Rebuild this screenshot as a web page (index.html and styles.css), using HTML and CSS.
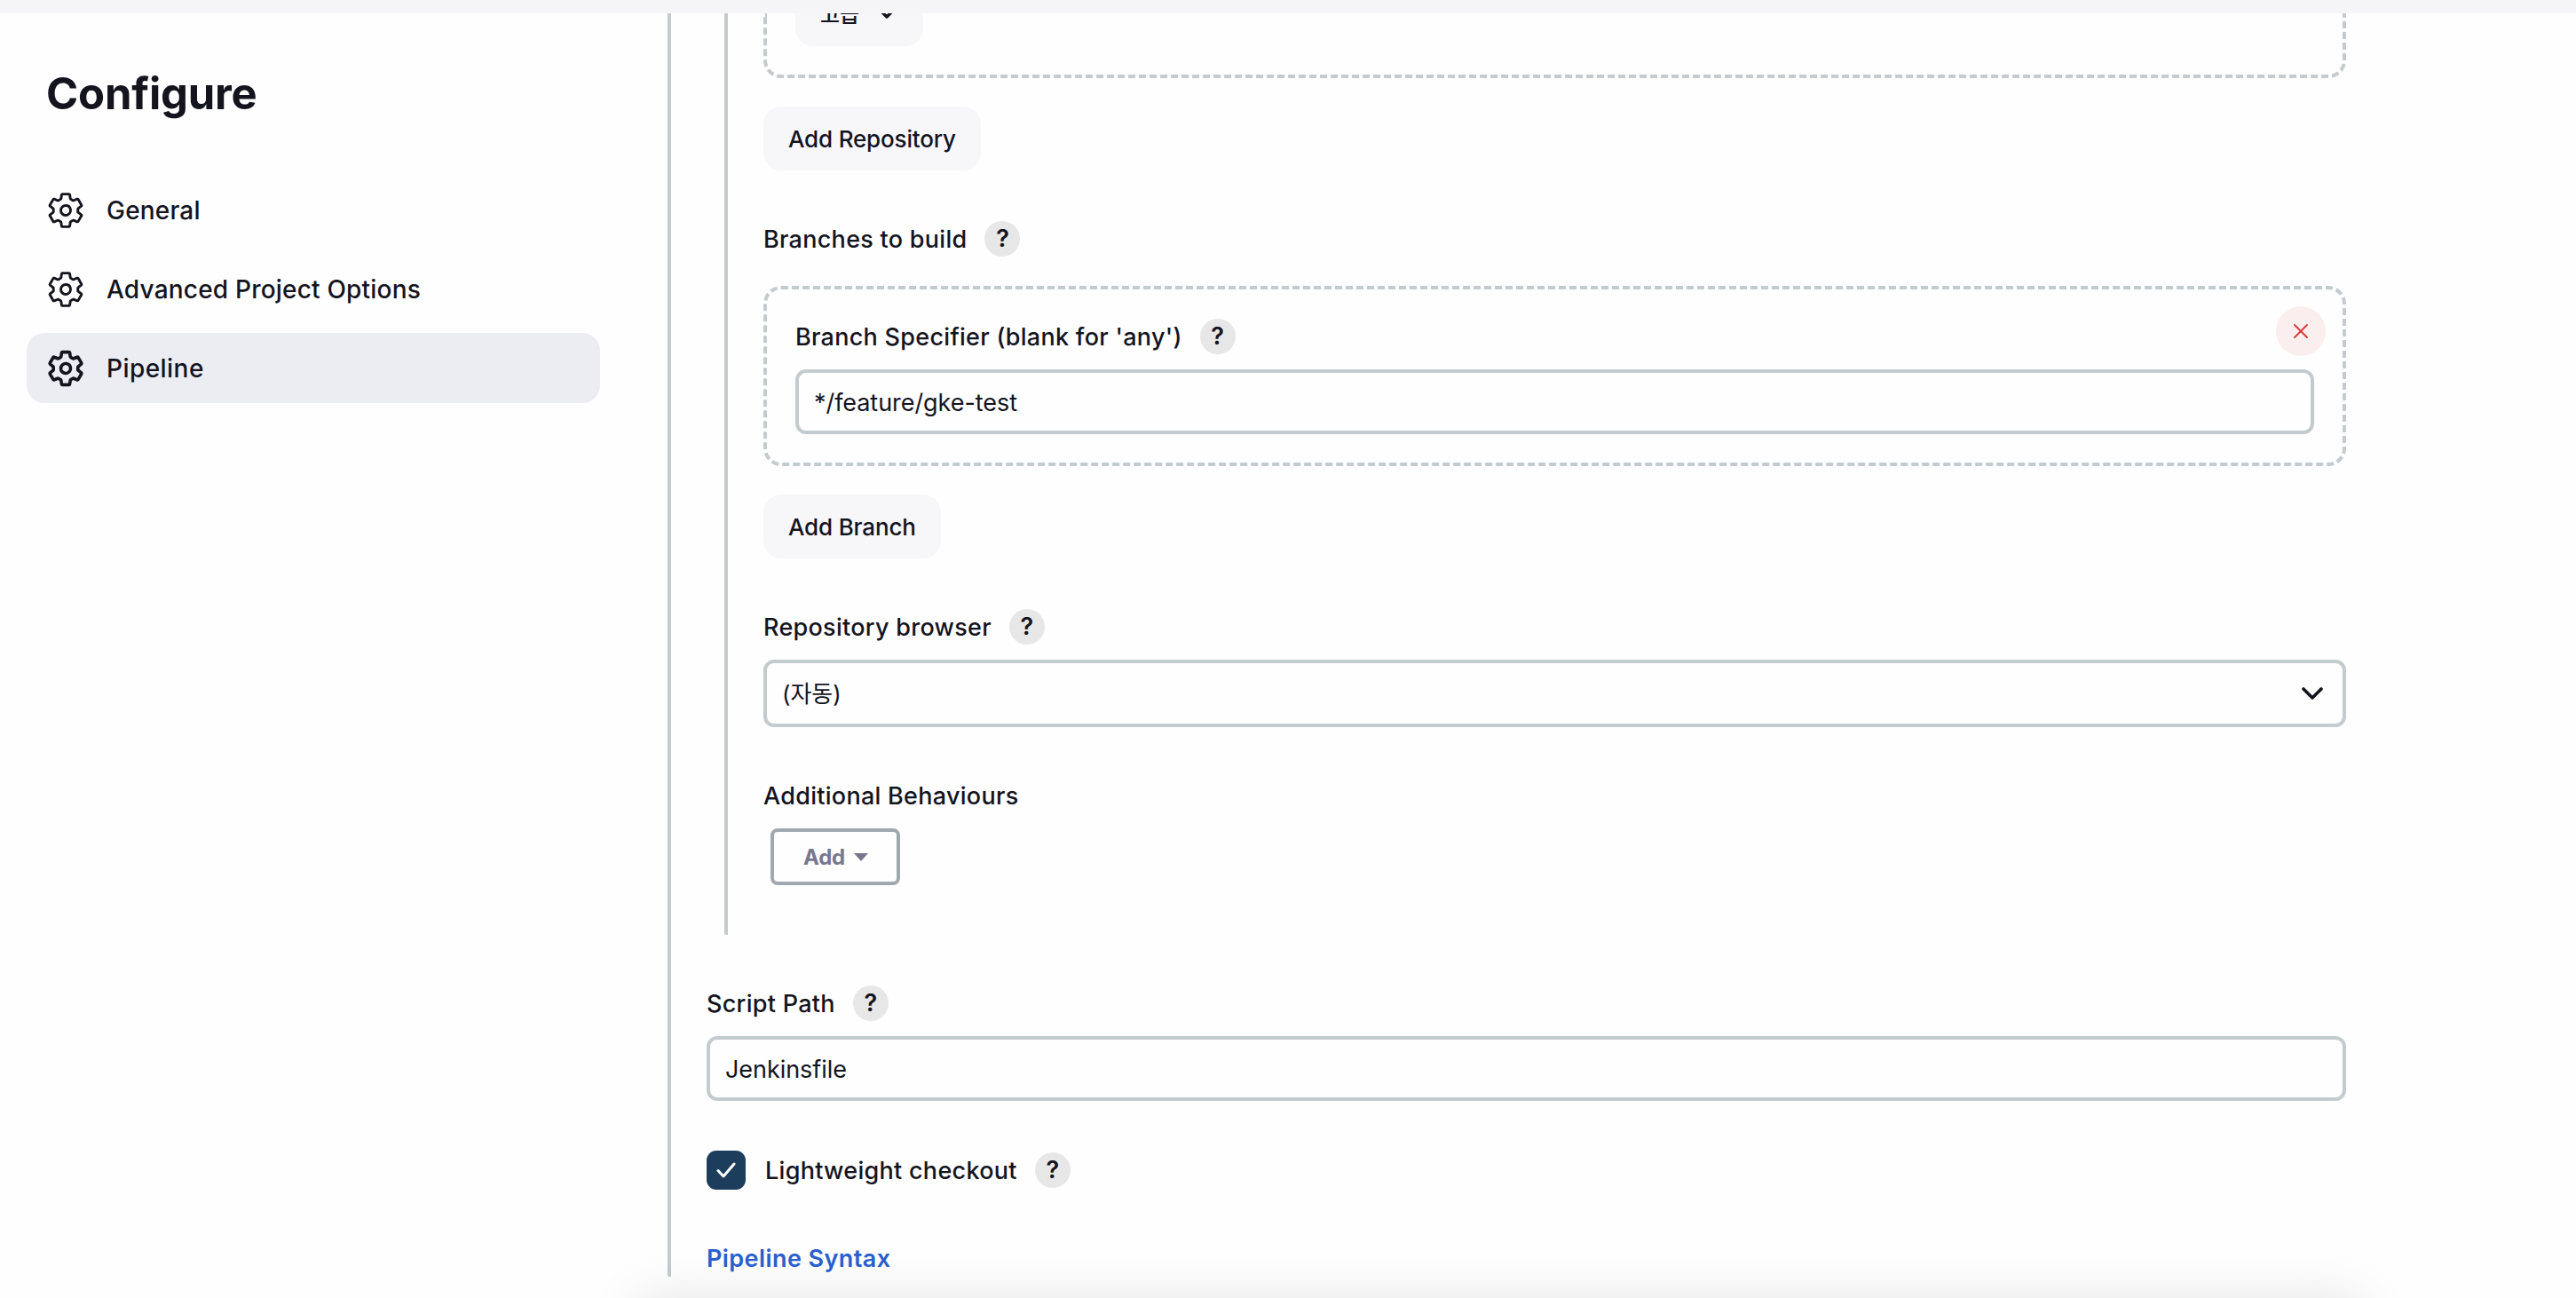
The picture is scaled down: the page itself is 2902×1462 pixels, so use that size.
FILE: index.html
```html
<!DOCTYPE html>
<html lang="ko">
<head>
<meta charset="utf-8">
<title>Configure</title>
<link rel="stylesheet" href="styles.css">
</head>
<body>
<svg class="sprite" aria-hidden="true">
  <symbol id="gear" viewBox="0 0 512 512"><path d="M262.29 192.31a64 64 0 1057.4 57.4 64.13 64.13 0 00-57.4-57.4zM416.39 256a154.34 154.34 0 01-1.53 20.79l45.21 35.46a10.81 10.81 0 012.45 13.75l-42.77 74a10.81 10.81 0 01-13.14 4.59l-44.9-18.08a16.11 16.11 0 00-15.17 1.75A164.48 164.48 0 01325 400.8a15.94 15.94 0 00-8.82 12.14l-6.73 47.89a11.08 11.08 0 01-10.68 9.17h-85.54a11.11 11.11 0 01-10.69-8.87l-6.72-47.82a16.07 16.07 0 00-9-12.22 155.3 155.3 0 01-21.46-12.57 16 16 0 00-15.11-1.71l-44.89 18.07a10.81 10.81 0 01-13.14-4.58l-42.77-74a10.8 10.8 0 012.45-13.75l38.21-30a16.05 16.05 0 006-14.08c-.36-4.17-.58-8.33-.58-12.5s.21-8.27.58-12.35a16 16 0 00-6.07-13.94l-38.19-30A10.81 10.81 0 0149.48 186l42.77-74a10.81 10.81 0 0113.14-4.59l44.9 18.08a16.11 16.11 0 0015.17-1.75A164.48 164.48 0 01187 111.2a15.94 15.94 0 008.82-12.14l6.73-47.89A11.08 11.08 0 01213.23 42h85.54a11.11 11.11 0 0110.69 8.87l6.72 47.82a16.07 16.07 0 009 12.22 155.3 155.3 0 0121.46 12.57 16 16 0 0015.11 1.71l44.89-18.07a10.81 10.81 0 0113.14 4.58l42.77 74a10.8 10.8 0 01-2.45 13.75l-38.21 30a16.05 16.05 0 00-6.05 14.08c.33 4.14.55 8.3.55 12.47z"/></symbol>
</svg>
<header class="breadcrumb-bar"></header>
<div class="page">
  <aside class="side">
    <h1 class="title">Configure</h1>
    <nav class="nav">
      <a class="nav-item"><svg class="gear"><use href="#gear"/></svg><span>General</span></a>
      <a class="nav-item"><svg class="gear"><use href="#gear"/></svg><span>Advanced Project Options</span></a>
      <a class="nav-item active"><svg class="gear"><use href="#gear"/></svg><span>Pipeline</span></a>
    </nav>
  </aside>
  <main class="definition">
    <section class="scm">
      <div class="repo-box">
        <button class="btn advanced"><span>고급</span><svg class="adv-chevron" viewBox="0 0 16 10"><path d="M2 2l6 6 6-6"/></svg></button>
      </div>
      <button class="btn after-box">Add Repository</button>
      <div class="label section"><span>Branches to build</span><b class="help">?</b></div>
      <div class="branch-box">
        <button class="delete" aria-label="Delete"><svg viewBox="0 0 16 16"><path d="M1 1l14 14M15 1L1 15"/></svg></button>
        <div class="label"><span>Branch Specifier (blank for 'any')</span><b class="help">?</b></div>
        <div class="input">*/feature/gke-test</div>
      </div>
      <button class="btn after-box">Add Branch</button>
      <div class="label section"><span>Repository browser</span><b class="help">?</b></div>
      <div class="input select"><span>(자동)</span><svg class="chevron" viewBox="0 0 24 14"><path d="M2 2l10 10L22 2"/></svg></div>
      <div class="label section"><span>Additional Behaviours</span></div>
      <button class="add-menu"><span>Add</span><i class="caret"></i></button>
    </section>
    <div class="label section"><span>Script Path</span><b class="help">?</b></div>
    <div class="input">Jenkinsfile</div>
    <div class="check-row">
      <i class="checkbox"><svg viewBox="0 0 22 18"><path d="M2 9.5l6 6.5L20 2"/></svg></i>
      <div class="label"><span>Lightweight checkout</span><b class="help">?</b></div>
    </div>
    <a class="syntax">Pipeline Syntax</a>
  </main>
  <div class="bottom-bar"></div>
</div>
</body>
</html>
```
FILE: styles.css
```css
* { box-sizing: border-box; }

body {
  margin: 0;
  height: 1462px;
  overflow: hidden;
  background: #fefefe;
  color: #14141f;
  font-family: Inter, "Noto Sans CJK KR", sans-serif;
  font-size: 27px;
  font-weight: 500;
}

button { font: inherit; color: inherit; border: 0; padding: 0; }
.sprite { display: none; }

.breadcrumb-bar { height: 15px; background: #f5f5f8; }

.page {
  position: relative;
  display: flex;
  height: 1447px;
  overflow: hidden;
}

/* Side panel */
.side { width: 752px; padding: 0 76px 0 30px; }
.title {
  margin: 59px 0 0 22px;
  font-size: 49px;
  font-weight: 700;
  line-height: 64px;
  letter-spacing: -.2px;
}
.nav {
  display: flex;
  flex-direction: column;
  gap: 10px;
  margin-top: 59px;
}
.nav-item {
  display: flex;
  align-items: center;
  gap: 24px;
  height: 79px;
  padding-left: 22px;
  border-radius: 20px;
  font-size: 28px;
  letter-spacing: .2px;
}
.nav-item.active {
  background: #ecedf3;
  font-weight: 550;
  letter-spacing: .45px;
}
svg path { fill: none; stroke: currentColor; stroke-linecap: round; stroke-linejoin: round; }
.gear { width: 44px; height: 44px; stroke-width: 34px; }
.active .gear { stroke-width: 42px; }

/* Form */
.definition {
  width: 1891px;
  height: 1423px;
  padding-left: 40px;
  border-left: 4px solid #c4cbcf;
  border-bottom-left-radius: 2px;
}
.scm {
  height: 1038px;
  margin-left: 20px;
  padding-left: 40px;
  border-left: 4px solid #c4cbcf;
  border-bottom-left-radius: 2px;
}
.repo-box {
  display: flex;
  align-items: flex-end;
  height: 73px;
  padding: 0 32px 32px;
  overflow: hidden;
  border: 4px dashed #c4cbcf;
  border-top: 0;
  border-radius: 0 0 20px 20px;
}
.btn {
  display: block;
  height: 72px;
  padding: 0 28px;
  border-radius: 20px;
  background: #f7f7fa;
  font-size: 26px;
  letter-spacing: -.16px;
  white-space: nowrap;
}
.after-box { margin-top: 32px; }
.advanced {
  display: flex;
  flex: none;
  align-items: center;
  justify-content: space-between;
  width: 144px;
  font-size: 24px;
}
.advanced span { padding-bottom: 3px; }
.adv-chevron { width: 16px; height: 10px; margin-right: 5px; }
.adv-chevron path { stroke-width: 3.4px; }

.label {
  display: flex;
  align-items: center;
  gap: 20px;
  height: 40px;
  letter-spacing: .28px;
  white-space: nowrap;
}
.label.section { margin-top: 57px; }
.help {
  width: 40px;
  height: 40px;
  border-radius: 50%;
  background: #e7e7e7;
  font-size: 27px;
  font-weight: 600;
  letter-spacing: 0;
  line-height: 40px;
  text-align: center;
}

.input {
  display: flex;
  align-items: center;
  height: 73px;
  margin-top: 17px;
  padding: 1px 17px 0;
  border: 4px solid #c4cbcf;
  border-radius: 12px;
  font-weight: 400;
  letter-spacing: -.05px;
}
.select {
  justify-content: space-between;
  height: 76px;
  padding: 0 22px 0 17px;
  font-size: 26px;
}
.select span { padding-bottom: 3px; }
.chevron { width: 24px; height: 14px; }
.chevron path { stroke-width: 3.6px; }

.branch-box {
  position: relative;
  height: 203px;
  margin-top: 33px;
  padding: 33px 32px 32px;
  border: 4px dashed #c4cbcf;
  border-radius: 20px;
}
.delete {
  position: absolute;
  top: 19px;
  right: 19px;
  display: flex;
  align-items: center;
  justify-content: center;
  width: 56px;
  height: 56px;
  border-radius: 50%;
  background: #fbeeee;
  color: #d93434;
}
.delete svg { width: 16px; height: 16px; }
.delete path { stroke-width: 1.8px; }

.add-menu {
  display: flex;
  align-items: center;
  gap: 10px;
  width: 146px;
  height: 64px;
  margin: 17px 0 0 8px;
  padding-left: 33px;
  border: 4px solid #9ea8ae;
  border-radius: 8px;
  background: none;
  color: #77778e;
  font-size: 24px;
  font-weight: 700;
  letter-spacing: -.2px;
}
.caret {
  border: 8px solid transparent;
  border-top: 9px solid #77778e;
  border-bottom: 0;
}

.check-row { display: flex; align-items: center; gap: 22px; height: 44px; margin-top: 56px; }
.checkbox {
  display: flex;
  align-items: center;
  justify-content: center;
  width: 44px;
  height: 44px;
  border-radius: 11px;
  background: #1c3d5c;
  color: #fff;
}
.checkbox svg { width: 22px; height: 18px; }
.checkbox path { stroke-width: 3px; }
.syntax {
  display: block;
  margin-top: 58px;
  color: #2a60cf;
  font-weight: 600;
  letter-spacing: .42px;
  line-height: 40px;
}

/* Sticky save bar sits just below the fold; only its shadow shows */
.bottom-bar {
  position: absolute;
  left: 716px;
  top: 1447px;
  width: 1947px;
  height: 120px;
  border-radius: 20px;
  box-shadow: 0 0 60px rgba(0, 0, 0, .1);
}
```
